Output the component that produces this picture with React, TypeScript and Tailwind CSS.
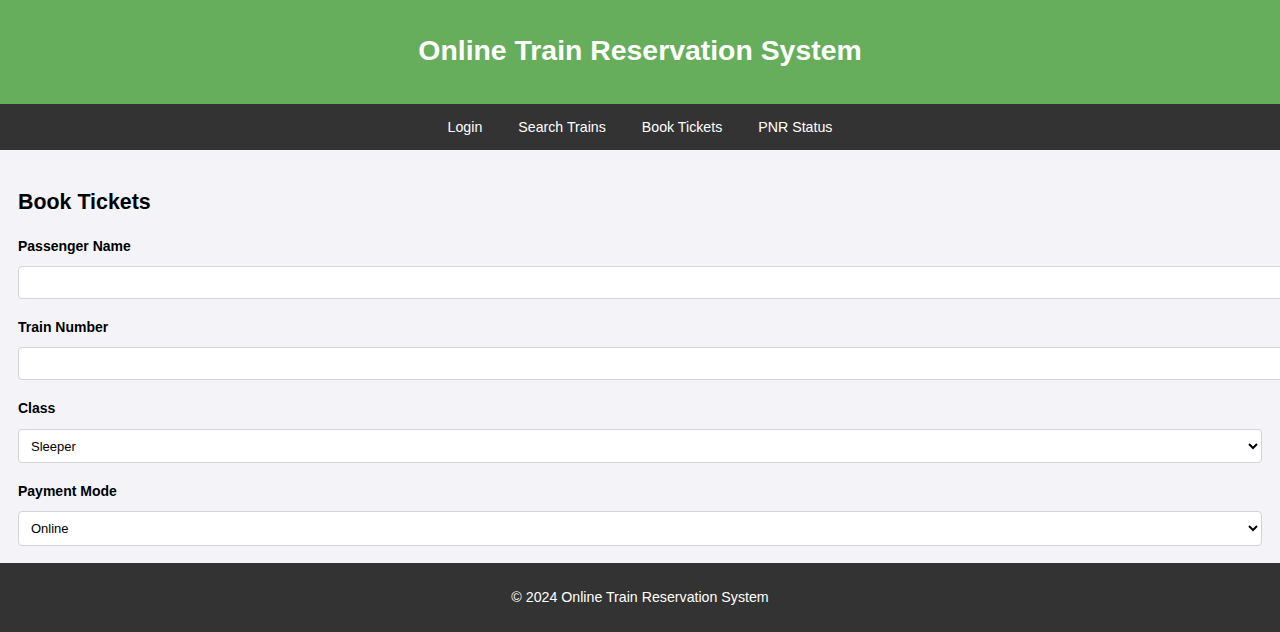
export default function App() {
  const navLinks = ["Login", "Search Trains", "Book Tickets", "PNR Status"];

  return (
    <div className="min-h-[632px] overflow-x-hidden bg-[#f3f3f8] font-['Liberation_Sans',Arial,sans-serif] text-black">
      <header className="flex h-[104px] items-center justify-center bg-[#67ae5c] pb-[4px]">
        <h1 className="text-[28.4px] font-bold text-white">Online Train Reservation System</h1>
      </header>

      <nav className="flex h-[46px] items-center justify-center gap-9 bg-[#333333] pt-[2px]">
        {navLinks.map((link) => (
          <a key={link} href="#" className="text-[14.2px] text-white">
            {link}
          </a>
        ))}
      </nav>

      <main className="px-[18px] pt-[39px] pb-[17px]">
        <h2 className="text-[21.4px] font-bold leading-[26px]">Book Tickets</h2>

        <form className="mt-[23px] flex flex-col">
          <label className="text-[14px] font-bold leading-[16px]">Passenger Name</label>
          <input
            type="text"
            className="mt-[12px] h-[33px] w-[calc(100%+24px)] rounded border border-[#d4d4d8] bg-white px-3"
          />

          <label className="mt-[20px] text-[14px] font-bold leading-[16px]">Train Number</label>
          <input
            type="text"
            className="mt-[12px] h-[33px] w-[calc(100%+24px)] rounded border border-[#d4d4d8] bg-white px-3"
          />

          <label className="mt-[20px] text-[14px] font-bold leading-[16px]">Class</label>
          <select className="mt-[13px] h-[34px] w-full rounded border border-[#d4d4d8] bg-white px-2 text-[13px]">
            <option>Sleeper</option>
            <option>AC 3 Tier</option>
            <option>AC 2 Tier</option>
          </select>

          <label className="mt-[20px] text-[14px] font-bold leading-[16px]">Payment Mode</label>
          <select className="mt-[12px] h-[35px] w-full rounded border border-[#d4d4d8] bg-white px-2 text-[13px]">
            <option>Online</option>
            <option>Cash</option>
          </select>
        </form>
      </main>

      <footer className="flex h-[69px] items-center justify-center bg-[#333333]">
        <p className="text-[14.2px] text-white">© 2024 Online Train Reservation System</p>
      </footer>
    </div>
  );
}
